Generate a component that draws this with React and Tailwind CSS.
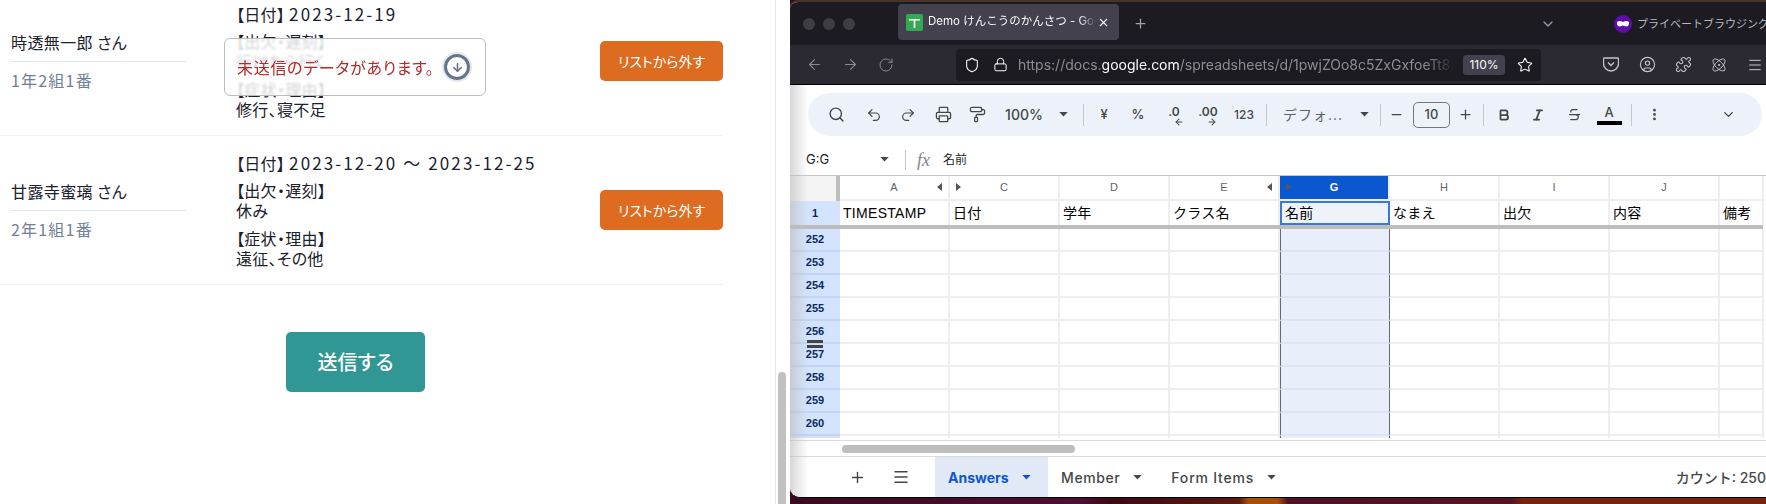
import React from "react";
import {
  ArrowDown, ArrowLeft, ArrowRight, Atom, Bold, ChevronDown, CircleUser, Italic, Lock, Menu, Minus,
  MoreVertical, PaintRoller, Plus, Printer, Puzzle, Redo2, RotateCw, Search, Shield, Star, Strikethrough, Undo2, X,
} from "lucide-react";

const students = [
  {
    name: "時透無一郎 さん",
    grade: "1年2組1番",
    date: "2023-12-19",
    attendance: "行けたら行く",
    reason: "修行、寝不足",
  },
  {
    name: "甘露寺蜜璃 さん",
    grade: "2年1組1番",
    date: "2023-12-20 ～ 2023-12-25",
    attendance: "休み",
    reason: "遠征、その他",
  },
];

const columns = ["A", "C", "D", "E", "G", "H", "I", "J", ""];
const headers = ["TIMESTAMP", "日付", "学年", "クラス名", "名前", "なまえ", "出欠", "内容", "備考"];
const rowNumbers = [252, 253, 254, 255, 256, 257, 258, 259, 260];

const Caret = ({ color = "#444746" }) => (
  <svg width="9" height="5" viewBox="0 0 10 6"><path d="M0 0h10L5 5.500z" fill={color} /></svg>
);

const Tri = ({ left }) => (
  <svg width="5" height="8" viewBox="0 0 5 8"><path d={left ? "M5 0v8L0 4z" : "M0 0v8l5-4z"} fill="#555" /></svg>
);

const Tool = ({ children }) => (
  <div className="w-[34px] h-[26px] shrink-0 flex items-center justify-center text-[#444746]">{children}</div>
);

const Sep = () => <div className="w-px h-[22px] bg-[#c4c7c5] shrink-0" />;

const StudentRow = ({ s }) => (
  <div className="flex items-center h-[149px] w-[723px] pl-[11px] border-b border-[#edf2f7]">
    <div className="w-[176px] shrink-0 pb-[2px]">
      <div className="h-[34px] pt-[2px] border-b border-[#e2e8f0] text-[16px] leading-[24px] tracking-[0.4px] text-[#1a202c]">{s.name}</div>
      <div className="pt-[6px] text-[16px] leading-[24px] tracking-[1.2px] text-[#718096]">{s.grade}</div>
    </div>
    <div className="ml-[49px] flex-1 self-start pt-[17px] text-[16px] leading-[20px] tracking-[0.3px] text-[#1a202c]">
      <div>【日付】 <span className="text-[17px] tracking-[2.1px]">{s.date}</span></div>
      <div className="mt-[7px]">【出欠・遅刻】</div>
      <div>{s.attendance}</div>
      <div className="mt-2">【症状・理由】</div>
      <div>{s.reason}</div>
    </div>
    <button className="w-[123px] h-[40px] shrink-0 rounded-[5px] bg-[#dd6b20] text-white text-[14px]">リストから外す</button>
  </div>
);

const LeftPanel = () => (
  <div className="relative w-[775px] h-full shrink-0 bg-white overflow-hidden font-['Noto_Sans_CJK_JP',sans-serif] [font-feature-settings:'palt']">
    <div className="-mt-[13px]">
      {students.map((s) => <StudentRow key={s.name} s={s} />)}
    </div>
    <div className="w-[711px] mt-[47px] flex justify-center">
      <button className="w-[139px] h-[60px] rounded-[5px] bg-[#319795] text-white text-[20px] font-medium">送信する</button>
    </div>
    <div className="absolute left-[224px] top-[38px] w-[262px] h-[58px] flex items-center justify-between pl-[12px] pr-[15px] rounded-[6px] border border-[#bdbdbd] bg-white/80 backdrop-blur-[1px]">
      <span className="text-[16px] tracking-[0.7px] text-[#b02a2a] whitespace-nowrap">未送信のデータがあります。</span>
      <div className="w-[26px] h-[26px] shrink-0 flex items-center justify-center rounded-full border-[3px] border-[#64748b] ring-2 ring-[#e2e8f0] text-[#64748b]">
        <ArrowDown size={13} strokeWidth={3} />
      </div>
    </div>
  </div>
);

const TabBar = () => (
  <div className="h-[43px] bg-[#1c1b22] flex items-center shrink-0 relative overflow-hidden">
    <div className="flex gap-2 ml-[13px] shrink-0">
      <div className="w-3 h-3 rounded-full bg-[#3f3e44]" />
      <div className="w-3 h-3 rounded-full bg-[#3f3e44]" />
      <div className="w-3 h-3 rounded-full bg-[#3f3e44]" />
    </div>
    <div className="ml-[43px] w-[221px] h-9 -mt-[3px] shrink-0 rounded-[4px] bg-[#42414d] flex items-center pl-2 pr-[8px] text-[#fbfbfe]">
      <svg width="17" height="17" viewBox="0 0 17 17" className="shrink-0">
        <rect width="17" height="17" rx="2" fill="#34a853" />
        <path d="M3 5h11v1.600H9.300V14H7.700V6.600H3z" fill="#fff" />
      </svg>
      <span className="ml-[5px] w-[168px] whitespace-nowrap overflow-hidden text-[11.5px] [mask-image:linear-gradient(to_right,black_90%,transparent)] font-['Inter','Noto_Sans_CJK_JP',sans-serif]">Demo けんこうのかんさつ - Goog</span>
      <X size={13} className="ml-[1px] shrink-0" />
    </div>
    <Plus size={15} className="ml-[14px] shrink-0 text-[#a5a4ab]" />
    <ChevronDown size={16} className="ml-[392px] shrink-0 text-[#9a99a1]" />
    <svg width="18" height="18" viewBox="0 0 18 18" className="ml-[58px] shrink-0">
      <circle cx="9" cy="9" r="9" fill="#5b0fa8" />
      <path d="M3 7c2-1.500 4-1 6 0 2-1 4-1.500 6 0 .4 3-1 4.500-3 4.500-1.300 0-2-1-3-1s-1.700 1-3 1C4 11.500 2.600 10 3 7z" fill="#fff" />
    </svg>
    <span className="ml-[5px] whitespace-nowrap text-[11px] text-[#b9b8bf] font-['Noto_Sans_CJK_JP',sans-serif]">プライベートブラウジング</span>
  </div>
);

const NavBar = () => (
  <div className="h-10 bg-[#2b2a33] border-b border-black flex items-center shrink-0 overflow-hidden">
    <ArrowLeft size={17} strokeWidth={1.5} className="ml-[16px] text-[#8a8990] shrink-0" />
    <ArrowRight size={17} strokeWidth={1.5} className="ml-[19px] text-[#8a8990] shrink-0" />
    <RotateCw size={16} strokeWidth={1.5} className="ml-[19px] text-[#8a8990] shrink-0" />
    <div className="ml-[62px] w-[585px] h-8 shrink-0 rounded-[4px] bg-[#1c1b22] flex items-center pl-[8px] text-[#fbfbfe]">
      <Shield size={16} strokeWidth={1.6} className="shrink-0" />
      <Lock size={15} strokeWidth={1.6} className="ml-[13px] shrink-0" />
      <div className="ml-[10px] w-[437px] shrink-0 overflow-hidden whitespace-nowrap text-[14px] text-[#8d8c92] font-['Inter',sans-serif] [mask-image:linear-gradient(to_right,black_93%,transparent)]">
        https://docs.<span className="text-[#fbfbfe]">google.com</span>/spreadsheets/d/1pwjZOo8c5ZxGxfoeTt8Ae9
      </div>
      <div className="ml-[8px] w-[42px] h-5 shrink-0 rounded-[3px] bg-[#42414d] flex items-center justify-center text-[12px] font-['Inter',sans-serif]">110%</div>
      <Star size={16} strokeWidth={1.6} className="ml-[12px] shrink-0" />
    </div>
    <svg width="16" height="15" viewBox="0 0 16 15" fill="none" stroke="#c5c4ca" strokeWidth="1.300" className="ml-[62px] shrink-0">
      <path d="M1.500 1h13a1 1 0 0 1 1 1v4.500a7.500 7.500 0 0 1-15 0V2a1 1 0 0 1 .5-1z" />
      <path d="M5 5.500l3 3 3-3" />
    </svg>
    <CircleUser size={17} strokeWidth={1.6} className="ml-[20px] text-[#c5c4ca] shrink-0" />
    <Puzzle size={17} strokeWidth={1.5} className="ml-[19px] text-[#c5c4ca] shrink-0" />
    <Atom size={16} strokeWidth={1.5} className="ml-[19px] text-[#c5c4ca] shrink-0" />
    <Menu size={16} strokeWidth={1.5} className="ml-[20px] text-[#c5c4ca] shrink-0" />
  </div>
);

const FormatBar = () => (
  <div className="h-[51px] pt-[8px] pl-[18px] pr-[4px] shrink-0 bg-white">
    <div className="h-[43px] rounded-full bg-[#edf2fa] flex items-center pl-[11px] text-[#444746] font-['Inter','Noto_Sans_CJK_JP',sans-serif]">
      <Tool><Search size={17} strokeWidth={2} /></Tool>
      <div className="w-1 shrink-0" />
      <Tool><Undo2 size={16} strokeWidth={1.8} /></Tool>
      <Tool><Redo2 size={16} strokeWidth={1.8} /></Tool>
      <div className="w-px shrink-0" />
      <Tool><Printer size={17} strokeWidth={1.8} /></Tool>
      <Tool><PaintRoller size={17} strokeWidth={1.8} /></Tool>
      <div className="w-[60px] shrink-0 text-center text-[14px] font-medium">100%</div>
      <div className="w-[18px] shrink-0 flex justify-center"><Caret /></div>
      <div className="w-[11px] shrink-0" />
      <Sep />
      <div className="w-[3px] shrink-0" />
      <Tool><span className="text-[13px] font-medium">¥</span></Tool>
      <Tool><span className="text-[13px] font-medium">%</span></Tool>
      <div className="w-[2px] shrink-0" />
      <Tool>
        <div className="relative text-[12px] font-semibold leading-none -mt-[6px]">.0
          <ArrowLeft size={10} strokeWidth={2.5} className="absolute left-[6px] top-[11px]" />
        </div>
      </Tool>
      <Tool>
        <div className="relative text-[12px] font-semibold leading-none -mt-[6px]">.00
          <ArrowRight size={10} strokeWidth={2.5} className="absolute left-[9px] top-[11px]" />
        </div>
      </Tool>
      <div className="w-[2px] shrink-0" />
      <Tool><span className="text-[12px] font-medium">123</span></Tool>
      <div className="w-[5px] shrink-0" />
      <Sep />
      <div className="w-[16px] shrink-0" />
      <div className="w-[72px] shrink-0 text-[14px] tracking-[1px] text-[#5f6368] whitespace-nowrap">デフォ...</div>
      <div className="w-[18px] shrink-0 flex justify-center"><Caret /></div>
      <div className="w-[7px] shrink-0" />
      <Sep />
      <div className="w-[30px] shrink-0 flex justify-center"><Minus size={15} /></div>
      <div className="w-[37px] h-[26px] shrink-0 ml-[2px] rounded-[5px] border border-[#747775] flex items-center justify-center text-[13px] font-medium">10</div>
      <div className="w-[30px] shrink-0 flex justify-center"><Plus size={15} /></div>
      <div className="w-[3px] shrink-0" />
      <Sep />
      <div className="w-[3px] shrink-0" />
      <Tool><Bold size={14} strokeWidth={3} /></Tool>
      <Tool><Italic size={14} strokeWidth={3} /></Tool>
      <div className="w-[2px] shrink-0" />
      <Tool><Strikethrough size={15} strokeWidth={2} /></Tool>
      <div className="w-px shrink-0" />
      <div className="w-[34px] shrink-0 flex flex-col items-center">
        <span className="text-[13px] font-medium leading-[16px]">A</span>
        <div className="w-[25px] h-1 mt-[1px] bg-black" />
      </div>
      <div className="w-[5px] shrink-0" />
      <Sep />
      <div className="w-[5px] shrink-0" />
      <Tool><MoreVertical size={15} strokeWidth={2.5} /></Tool>
      <div className="w-[40px] shrink-0" />
      <Tool><ChevronDown size={15} strokeWidth={2.2} /></Tool>
    </div>
  </div>
);

const FormulaBar = () => (
  <div className="h-[39px] shrink-0 bg-white flex items-center pl-[16px] pt-[8px] text-[12px] text-[#1f1f1f] font-['Inter','Noto_Sans_CJK_JP',sans-serif]">
    <span className="w-[74px] text-[13px]">G:G</span>
    <Caret />
    <div className="ml-[16px] w-px h-5 bg-[#c4c7c5]" />
    <span className="ml-[11px] w-[25px] text-[18px] leading-none italic text-[#80868b] font-['Liberation_Serif',serif]">fx</span>
    <span className="ml-[1px]">名前</span>
  </div>
);

const Grid = () => (
  <div className="h-[265px] shrink-0 border-t border-[#c7c7c7] font-['Liberation_Sans','Noto_Sans_CJK_JP',sans-serif]">
    <div className="flex h-[25px]">
      <div className="w-[50px] shrink-0 bg-[#f4f4f4] border-r-4 border-[#bdbdbd]" />
      {columns.map((c, i) => (
        <div
          key={i}
          className={`${i === 8 ? "w-[44px]" : "w-[110px]"} shrink-0 relative flex items-center justify-center text-[11px] border-r-2 border-b-2 border-[#eeeeee] ${c === "G" ? "bg-[#0b57d0] text-white font-bold" : "bg-white text-[#5f6368]"}`}
        >
          {c}
          {(c === "A" || c === "E") && <span className="absolute right-[6px] top-[7px]"><Tri left /></span>}
          {(c === "C" || c === "G") && <span className="absolute left-[6px] top-[7px]"><Tri /></span>}
        </div>
      ))}
    </div>
    <div className="flex h-6">
      <div className="w-[50px] shrink-0 bg-[#d3e3fd] flex items-center justify-center text-[11px] font-bold text-[#0b2a5c]">1</div>
      {headers.map((h, i) => (
        <div
          key={h}
          className={`${i === 8 ? "w-[44px]" : "w-[110px]"} shrink-0 flex items-center pl-[3px] text-[14px] tracking-[0.3px] text-black whitespace-nowrap overflow-hidden ${i === 4 ? "bg-[#eef3fb] border-2 border-[#3b78d8]" : "border-r-2 border-[#eeeeee]"}`}
        >
          {h}
        </div>
      ))}
    </div>
    <div className="h-1 w-[973px] bg-[#bdbdbd]" />
    {rowNumbers.map((n) => (
      <div key={n} className="flex h-[23px]">
        <div className="relative w-[50px] shrink-0 bg-[#d3e3fd] flex items-center justify-center border-b-2 border-[#c4d5f2] text-[11px] font-bold text-[#0b2a5c]">
          {n}
          {n === 256 && <div className="absolute left-[17px] bottom-[-1px] w-4 h-[3px] bg-[#444]" />}
          {n === 257 && <div className="absolute left-[17px] top-[1px] w-4 h-[3px] bg-[#444]" />}
        </div>
        {columns.map((c, i) => (
          <div
            key={i}
            className={`${i === 8 ? "w-[44px]" : "w-[110px]"} shrink-0 border-b-2 ${c === "G" ? "bg-[#e8effb] border-x border-x-[#5f6b7a] border-b-[#dde5f3]" : "border-r-2 border-[#eeeeee]"}`}
          />
        ))}
      </div>
    ))}
    <div className="flex h-[2px]">
      <div className="w-[50px] shrink-0 bg-[#d3e3fd]" />
      {columns.map((c, i) => (
        <div
          key={i}
          className={`${i === 8 ? "w-[44px]" : "w-[110px]"} shrink-0 ${c === "G" ? "bg-[#e8effb] border-x border-[#5f6b7a]" : "border-r-2 border-[#eeeeee]"}`}
        />
      ))}
    </div>
  </div>
);

const SheetTabs = () => (
  <>
    <div className="h-[17px] shrink-0 bg-white border-t border-[#dadada] border-b pl-[50px] flex items-center">
      <div className="ml-[2px] w-[233px] h-2 rounded-full bg-[#bdbdbd]" />
    </div>
    <div className="h-10 shrink-0 bg-white flex items-center text-[14px] text-[#444746] font-['Inter','Noto_Sans_CJK_JP',sans-serif] font-medium rounded-bl-[10px]">
      <Plus size={17} strokeWidth={2} className="ml-[59px]" />
      <Menu size={18} strokeWidth={2} className="ml-[26px]" />
      <div className="ml-[25px] w-[113px] h-full bg-[#e1e9f7] flex items-center pl-[13px] text-[#0b57d0] font-bold">
        Answers
        <span className="ml-[13px]"><Caret color="#0b57d0" /></span>
      </div>
      <span className="ml-[13px] tracking-[0.6px]">Member</span>
      <span className="ml-[13px]"><Caret /></span>
      <span className="ml-[29px] tracking-[0.8px]">Form Items</span>
      <span className="ml-[13px]"><Caret /></span>
      <span className="ml-auto whitespace-nowrap">カウント: 250</span>
    </div>
  </>
);

const BrowserWindow = () => (
  <div className="flex-1 min-w-0 h-full overflow-hidden pb-[6px] bg-[linear-gradient(90deg,#3a0a20_0%,#4a1032_30%,#3a0a12_33%,#5a1a12_46%,#a85008_47%,#a85008_50%,#4d1228_51%,#551420_74%,#7a2210_75%,#7a2210_100%)]">
    <div className="relative h-full flex flex-col bg-white border-t-2 border-t-[#4a3428] border-b border-b-black rounded-tl-[8px] rounded-bl-[10px] overflow-hidden">
      <TabBar />
      <NavBar />
      <FormatBar />
      <FormulaBar />
      <Grid />
      <SheetTabs />
      <div className="absolute left-0 top-[83px] bottom-0 w-[18px] bg-gradient-to-r from-[#bdbdbd]/60 to-transparent pointer-events-none" />
    </div>
  </div>
);

const App = () => (
  <div className="flex w-[1766px] h-[504px] overflow-hidden bg-white">
    <LeftPanel />
    <div className="w-[15px] h-full shrink-0 border-l border-[#e8e8e8] bg-white flex flex-col justify-end pl-[2px]">
      <div className="w-2 h-[132px] rounded-t-full bg-[#c1c1c1]" />
    </div>
    <BrowserWindow />
  </div>
);

export default App;
